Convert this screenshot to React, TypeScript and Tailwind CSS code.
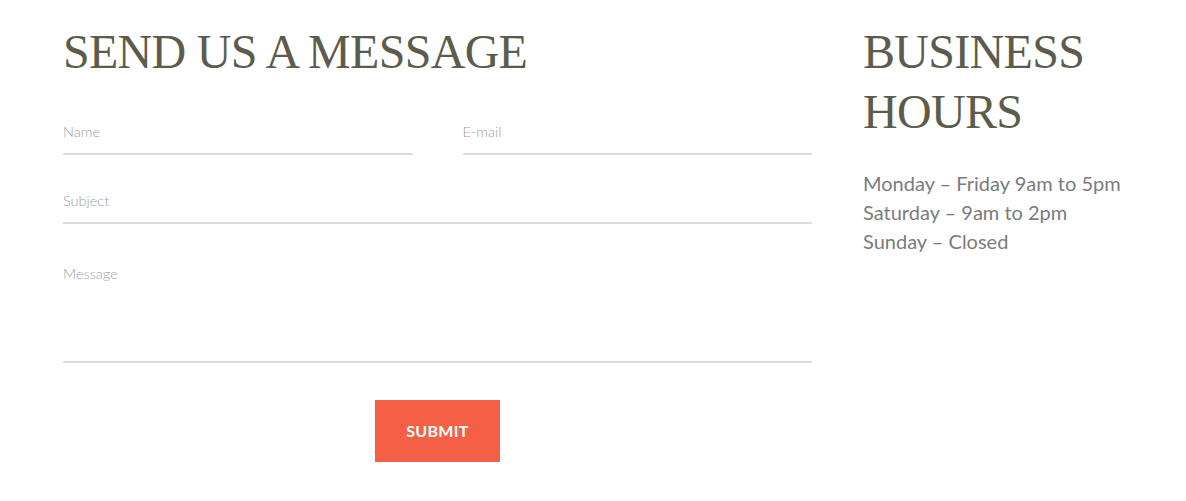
export default function App() {
  const field =
    'w-full bg-transparent border-0 border-b-2 border-[#dcdcdc] outline-none text-[14.5px] font-light text-[#555] placeholder:text-[#9e9ea4] pt-[2px] pb-[10px]'
  return (
    <div className="min-h-[501px] bg-white font-['Lato',sans-serif]">
      <div className="flex px-[63px] pt-[22px]">
        <form className="w-[749px] shrink-0" onSubmit={(e) => e.preventDefault()}>
          <h2 className="font-['Liberation_Serif',serif] text-[48px] leading-[60px] text-[#5d5c4c] tracking-[-0.7px]">
            SEND US A MESSAGE
          </h2>
          <div className="mt-[37px] flex gap-[50px]">
            <input className={field} placeholder="Name" />
            <input className={field} placeholder="E-mail" />
          </div>
          <div className="mt-[33px]">
            <input className={field} placeholder="Subject" />
          </div>
          <div className="mt-[37px]">
            <textarea
              className={field + ' h-[102px] resize-none block'}
              placeholder="Message"
            />
          </div>
          <div className="mt-[37px] flex justify-center">
            <button
              type="submit"
              className="w-[125px] h-[62px] bg-[#f55f45] text-white text-[16px] font-bold tracking-[0.3px]"
            >
              SUBMIT
            </button>
          </div>
        </form>
        <div className="ml-[51px] w-[260px]">
          <h2 className="font-['Liberation_Serif',serif] text-[48px] leading-[60px] text-[#5d5c4c] tracking-[-0.7px]">
            BUSINESS HOURS
          </h2>
          <div className="mt-[27px] text-[20px] leading-[29px] text-[#7b7b7b]">
            <p>Monday – Friday 9am to 5pm</p>
            <p>Saturday – 9am to 2pm</p>
            <p>Sunday – Closed</p>
          </div>
        </div>
      </div>
    </div>
  )
}
